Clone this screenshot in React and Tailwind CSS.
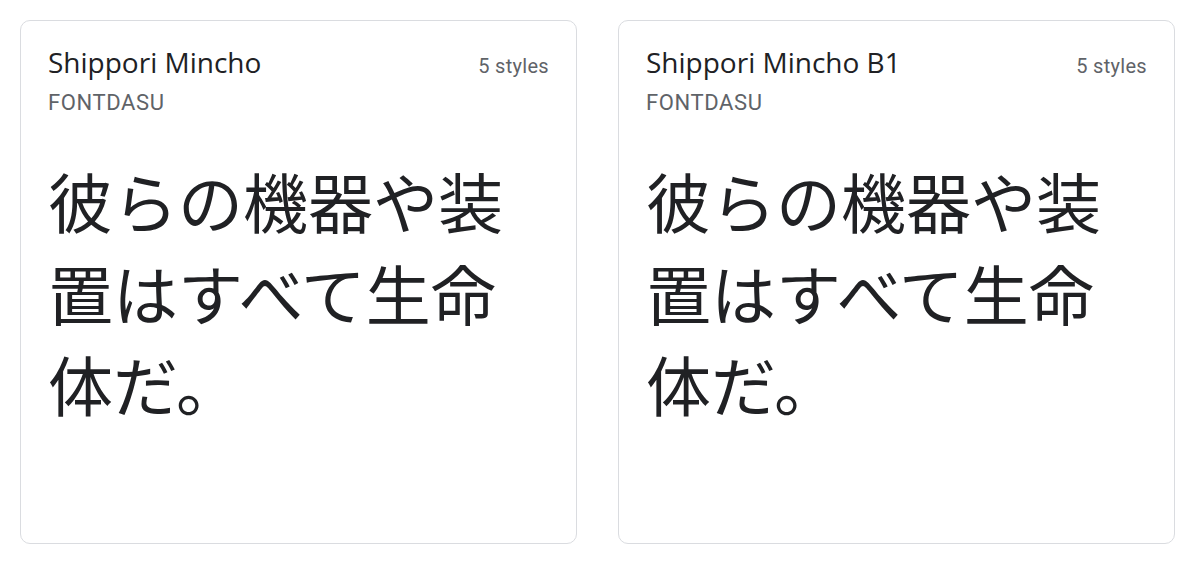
import React from "react";

function Card({ name }) {
  return (
    <div className="flex-1 h-[524px] rounded-[10px] border border-[#dadce0] bg-white px-[27px] pt-[23px]">
      <div className="flex items-start justify-between">
        <div className="flex flex-col">
          <div className="text-[28px] leading-[36px] text-[#202124]" style={{ fontFamily: "'Open Sans', Roboto, sans-serif" }}>
            {name}
          </div>
          <div className="mt-[10px] text-[22px] leading-[26px] text-[#5f6368] tracking-[0.6px]" style={{ fontFamily: "Roboto, sans-serif" }}>
            FONTDASU
          </div>
        </div>
        <div className="mt-[9px] text-[20px] leading-[26px] text-[#5f6368] tracking-[0.3px]" style={{ fontFamily: "Roboto, sans-serif" }}>
          5 styles
        </div>
      </div>
      <div
        className="mt-[39px] text-[65px] leading-[91.5px] text-[#202124]"
        style={{ fontFamily: "'Noto Sans CJK JP', sans-serif" }}
      >
        彼らの機器や装置はすべて生命体だ。
      </div>
    </div>
  );
}

export default function App() {
  return (
    <div className="w-[1200px] h-[568px] bg-white flex gap-[41px] pl-[20px] pr-[25px] pt-[20px]">
      <Card name="Shippori Mincho" />
      <Card name="Shippori Mincho B1" />
    </div>
  );
}
